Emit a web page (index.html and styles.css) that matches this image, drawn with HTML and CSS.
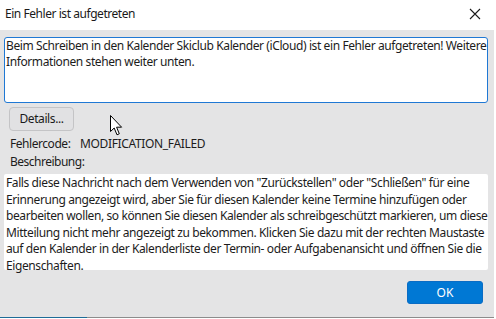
FILE: index.html
```html
<!DOCTYPE html>
<html lang="de">
<head>
<meta charset="utf-8">
<link rel="stylesheet" href="styles.css">
</head>
<body>
<div class="window">
  <div class="titlebar">
    <span class="title">Ein Fehler ist aufgetreten</span>
    <svg class="close" width="12" height="12" viewBox="0 0 12 12"><path d="M1 1L11 11M11 1L1 11" stroke="#1b1b1b" stroke-width="1.1" fill="none"/></svg>
  </div>
  <div class="content">
    <div class="msg">
      <div class="line">Beim Schreiben in den Kalender Skiclub Kalender (iCloud) ist ein Fehler aufgetreten! Weitere</div>
      <div class="line">Informationen stehen weiter unten.</div>
    </div>
    <div class="btnrow">
      <button class="details">Details...</button>
      <svg class="cursor" width="13" height="21" viewBox="0 0 13 21"><path d="M0.5 0.5 L0.5 16.5 L4.2 13 L7 19.8 L9.3 18.8 L6.6 12.2 L11.6 12.2 Z" fill="#fff" stroke="#000" stroke-width="1" stroke-linejoin="miter"/></svg>
    </div>
    <div class="coderow"><span class="label">Fehlercode:</span><span class="code">MODIFICATION_FAILED</span></div>
    <div class="desclabel">Beschreibung:</div>
    <div class="desc">
      <div class="line">Falls diese Nachricht nach dem Verwenden von "Zurückstellen" oder "Schließen" für eine</div>
      <div class="line">Erinnerung angezeigt wird, aber Sie für diesen Kalender keine Termine hinzufügen oder</div>
      <div class="line">bearbeiten wollen, so können Sie diesen Kalender als schreibgeschützt markieren, um diese</div>
      <div class="line">Mitteilung nicht mehr angezeigt zu bekommen. Klicken Sie dazu mit der rechten Maustaste</div>
      <div class="line">auf den Kalender in der Kalenderliste der Termin- oder Aufgabenansicht und öffnen Sie die</div>
      <div class="line">Eigenschaften.</div>
    </div>
    <div class="footer">
      <button class="ok">OK</button>
    </div>
  </div>
  <div class="edge"><span class="edge-blue"></span><span class="edge-gray"></span></div>
</div>
</body>
</html>
```

FILE: styles.css
```css
* { box-sizing: border-box; }
html, body { margin: 0; padding: 0; background: #ffffff; }
body {
  font-family: "Noto Sans", "Open Sans", sans-serif;
  font-size: 12px;
  color: #1c1c1c;
}
.window {
  width: 494px;
  height: 318px;
  display: flex;
  flex-direction: column;
}
.titlebar {
  height: 30px;
  background: #ffffff;
  display: flex;
  align-items: center;
  justify-content: space-between;
  padding: 0 13px 3px 5px;
}
.title { font-size: 12px; color: #1a1a1a; letter-spacing: -0.45px; }
.close { display: block; }
.content {
  flex: 1;
  background: #e4e4e5;
  padding: 7px 6px 0 4px;
  display: flex;
  flex-direction: column;
}
.line { white-space: nowrap; }
.msg {
  height: 66px;
  background: #ffffff;
  border: 1px solid #1f78d4;
  border-radius: 3px;
  padding: 0 1px;
  line-height: 16px;
  letter-spacing: -0.4px;
}
.btnrow {
  display: flex;
  align-items: flex-start;
  margin-top: 4px;
  padding-left: 5px;
  height: 24px;
}
.details {
  width: 65px;
  height: 24px;
  font: inherit;
  letter-spacing: -0.4px;
  color: #1a1a1a;
  background: #e1e1e3;
  border: 1px solid #c4c4c6;
  border-radius: 4px;
  padding: 0 0 2px 0;
}
.cursor {
  margin-left: 36px;
  margin-top: 8px;
  position: relative;
}
.coderow {
  margin-top: 5px;
  padding-left: 6px;
  line-height: 16px;
  display: flex;
}
.label { width: 70px; letter-spacing: -0.45px; }
.code { letter-spacing: -0.35px; }
.desclabel {
  margin-top: 2px;
  padding-left: 6px;
  line-height: 16px;
  letter-spacing: -0.5px;
}
.desc {
  margin-top: 4px;
  height: 96px;
  background: #ffffff;
  border-radius: 2px;
  padding: 1px 2px 0 2px;
  line-height: 16.5px;
  letter-spacing: -0.4px;
}
.footer {
  display: flex;
  justify-content: flex-end;
  margin-top: 11px;
  padding-right: 5px;
}
.ok {
  width: 76px;
  height: 23px;
  font: inherit;
  color: #ffffff;
  background: #0078d4;
  border: 1px solid #0a6cc4;
  border-radius: 3px;
  padding: 0 0 1px 0;
}
.edge {
  height: 1px;
  display: flex;
}
.edge-blue { width: 87px; background: #1e6b97; }
.edge-gray { flex: 1; background: #8c8c8c; }
```
